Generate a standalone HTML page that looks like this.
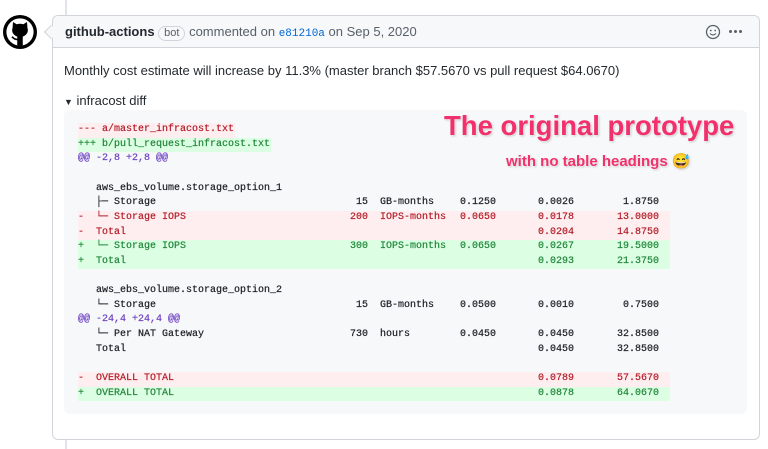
<!DOCTYPE html>
<html><head><meta charset="utf-8"><style>
*{margin:0;padding:0;box-sizing:border-box}
body{width:768px;height:449px;background:#fff;position:relative;overflow:hidden;font-family:"Liberation Sans",sans-serif;color:#24292e}
.abs{position:absolute}
.box{left:52px;top:15px;width:708px;height:425px;border:1px solid #d1d5da;border-radius:6px;background:#fff}
.hdr{left:0;top:0;width:706px;height:32px;background:#f6f8fa;border-bottom:1px solid #d1d5da;border-radius:6px 6px 0 0}
.code{left:64px;top:110px;width:683px;height:304px;background:#f6f8fa;border-radius:6px}
.r{position:absolute;left:78px;width:592px;height:14.65px;font-family:"Liberation Mono","DejaVu Sans Mono",monospace;font-size:10px;line-height:14.65px;color:#1b1f23;white-space:pre;-webkit-text-stroke:0.2px currentColor}
.r span{position:absolute;top:0}
.del{background:#ffeef0;color:#b31d28}
.add{background:#dcffe4;color:#22863a}
.p{left:0}.n{left:18px}.q{right:302px}.u{left:302px}.pr{left:382px}.h{left:460px}.m{right:11px}
</style></head><body>
<div class="abs" style="left:65px;top:0;width:2px;height:15px;background:#e1e4e8"></div>
<div class="abs" style="left:65px;top:440px;width:2px;height:9px;background:#e1e4e8"></div>
<svg class="abs" style="left:3px;top:15px" width="34" height="34" viewBox="0 0 16 16">
<circle cx="8" cy="8" r="8" fill="#000"/>
<circle cx="8" cy="8" r="6.4" fill="#fff"/>
<clipPath id="c"><circle cx="8" cy="8" r="6.4"/></clipPath>
<g clip-path="url(#c)" fill="#000">
<ellipse cx="8" cy="7.2" rx="3.7" ry="3.1"/>
<path d="M4.5 6.2L4.7 3.3 6.8 4.6ZM11.5 6.2L11.3 3.3 9.2 4.6Z"/>
<rect x="6.7" y="9" width="2.6" height="6"/>
<path d="M6.8 11.5C5.5 11.6 4.8 10.8 4.2 10.2" stroke="#000" stroke-width=".8" fill="none"/>
</g></svg>
<div class="abs box">
 <div class="abs hdr"></div>
</div>
<div class="abs" style="left:46px;top:27px;width:10px;height:10px;background:#f6f8fa;border-left:1px solid #d1d5da;border-bottom:1px solid #d1d5da;transform:rotate(45deg)"></div>
<div class="abs" style="left:65px;top:24px;font-size:13px;line-height:16px;color:#586069;white-space:nowrap"><b style="color:#24292e">github-actions</b> <span style="display:inline-block;border:1px solid #d1d5da;border-radius:10px;padding:0 5px;font-size:11px;line-height:13px">bot</span> commented on <span style="font-family:'Liberation Mono',monospace;font-size:11px;color:#0366d6">e81210a</span> on Sep 5, 2020</div>
<svg class="abs" style="left:705px;top:24px" width="16" height="16" viewBox="0 0 16 16"><circle cx="8" cy="8" r="6.5" fill="none" stroke="#586069" stroke-width="1.3"/><circle cx="5.8" cy="6.5" r=".9" fill="#586069"/><circle cx="10.2" cy="6.5" r=".9" fill="#586069"/><path d="M5 9.5q3 3 6 0" fill="none" stroke="#586069" stroke-width="1.2"/></svg>
<div class="abs" style="left:729px;top:30px;width:3px;height:3px;background:#586069;border-radius:50%;box-shadow:5px 0 #586069,10px 0 #586069"></div>
<div class="abs" style="left:64px;top:63px;font-size:13px;line-height:16px;white-space:nowrap">Monthly cost estimate will increase by 11.3% (master branch $57.5670 vs pull request $64.0670)</div>
<div class="abs" style="left:64px;top:93px;font-size:13px;line-height:16px;white-space:nowrap"><span style="font-size:9px">▼</span> infracost diff</div>
<div class="abs code"></div>

<div class="r" style="top:123px"><span class="p del" style="width:157px">--- a/master_infracost.txt</span></div>
<div class="r" style="top:137.65px"><span class="p add" style="width:193px">+++ b/pull_request_infracost.txt</span></div>
<div class="r" style="top:152.3px;color:#6f42c1"><span class="p">@@ -2,8 +2,8 @@</span></div>
<div class="r" style="top:181.6px"><span class="n">aws_ebs_volume.storage_option_1</span></div>
<div class="r" style="top:196.25px"><span class="n">├─ Storage</span><span class="q">15</span><span class="u">GB-months</span><span class="pr">0.1250</span><span class="h">0.0026</span><span class="m">1.8750</span></div>
<div class="r del" style="top:210.9px"><span class="p">-</span><span class="n">└─ Storage IOPS</span><span class="q">200</span><span class="u">IOPS-months</span><span class="pr">0.0650</span><span class="h">0.0178</span><span class="m">13.0000</span></div>
<div class="r del" style="top:225.55px"><span class="p">-</span><span class="n">Total</span><span class="h">0.0204</span><span class="m">14.8750</span></div>
<div class="r add" style="top:240.2px"><span class="p">+</span><span class="n">└─ Storage IOPS</span><span class="q">300</span><span class="u">IOPS-months</span><span class="pr">0.0650</span><span class="h">0.0267</span><span class="m">19.5000</span></div>
<div class="r add" style="top:254.85px"><span class="p">+</span><span class="n">Total</span><span class="h">0.0293</span><span class="m">21.3750</span></div>
<div class="r" style="top:284.15px"><span class="n">aws_ebs_volume.storage_option_2</span></div>
<div class="r" style="top:298.8px"><span class="n">└─ Storage</span><span class="q">15</span><span class="u">GB-months</span><span class="pr">0.0500</span><span class="h">0.0010</span><span class="m">0.7500</span></div>
<div class="r" style="top:313.45px;color:#6f42c1"><span class="p">@@ -24,4 +24,4 @@</span></div>
<div class="r" style="top:328.1px"><span class="n">└─ Per NAT Gateway</span><span class="q">730</span><span class="u">hours</span><span class="pr">0.0450</span><span class="h">0.0450</span><span class="m">32.8500</span></div>
<div class="r" style="top:342.75px"><span class="n">Total</span><span class="h">0.0450</span><span class="m">32.8500</span></div>
<div class="r del" style="top:372.05px"><span class="p">-</span><span class="n">OVERALL TOTAL</span><span class="h">0.0789</span><span class="m">57.5670</span></div>
<div class="r add" style="top:386.7px"><span class="p">+</span><span class="n">OVERALL TOTAL</span><span class="h">0.0878</span><span class="m">64.0670</span></div>

<div class="abs" style="left:444px;top:109px;font-size:27.5px;line-height:34px;font-weight:bold;color:#f2306c;white-space:nowrap;text-shadow:0 0 2px #fff,1px 1px 2px #bbb">The original prototype</div>
<div class="abs" style="left:506px;top:151px;font-size:15px;line-height:20px;font-weight:bold;color:#f2306c;white-space:nowrap;text-shadow:0 0 2px #fff,1px 1px 2px #bbb">with no table headings <span style="font-family:'Noto Color Emoji','DejaVu Sans',sans-serif">😅</span></div>
</body></html>
